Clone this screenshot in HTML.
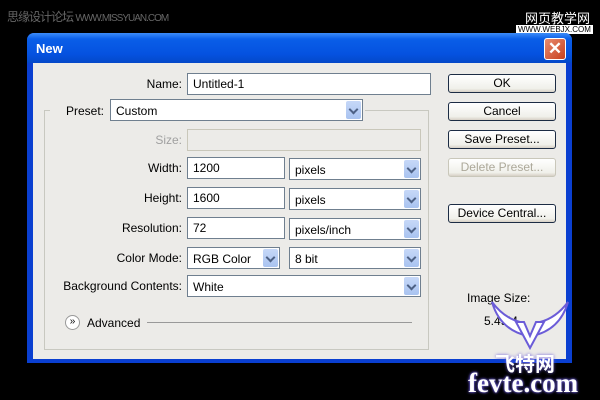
<!DOCTYPE html>
<html><head><style>
*{margin:0;padding:0;box-sizing:border-box}
body{width:600px;height:400px;background:#000;position:relative;overflow:hidden;font-family:"Liberation Sans","Noto Sans CJK SC",sans-serif;font-size:12px;color:#000}
.a{position:absolute}
.win{left:27px;top:33px;width:545px;height:330px;background:#0a3fd0;border-radius:7px 7px 0 0}
.title{left:27px;top:33px;width:545px;height:30px;border-radius:7px 7px 0 0;background:linear-gradient(#3c8cf8,#0a5ee8 20%,#0552e0 70%,#0448c8)}
.body{left:33px;top:63px;width:533px;height:296px;background:#ecebe8}
.lbl{text-align:right;width:160px}
.fld{background:#fff;border:1px solid #6f7f8f;height:22px;padding:3px 5px;font-size:12px}
.dd{background:#fff;border:1px solid #6f7f8f;height:22px;padding:4px 5px}
.dd i{position:absolute;right:1px;top:1px;width:15px;height:18px;background:linear-gradient(#c6d8f8,#a9c3f0);border-radius:2px}
.dd i:after{content:"";position:absolute;left:4px;top:5px;width:5px;height:5px;border-right:2px solid #4d6185;border-bottom:2px solid #4d6185;transform:rotate(45deg)}
.btn{left:448px;width:108px;height:19px;border:1px solid #1c2c44;border-radius:3px;background:linear-gradient(#fff,#f0f0ea 80%,#d6d0c5);text-align:center;line-height:17px}
</style></head><body>
<div class="a" style="left:7px;top:8px;color:#666;font-size:12px;letter-spacing:-1px">思缘设计论坛 <span style="font-size:10px">WWW.MISSYUAN.COM</span></div>
<div class="a" style="left:525px;top:8px;color:#fff;font-size:13px">网页教学网</div>
<div class="a" style="left:516px;top:25px;background:#fff;color:#000;font-size:8px;padding:0 2px">WWW.WEBJX.COM</div>
<div class="a win"></div>
<div class="a title"></div>
<div class="a" style="left:36px;top:41px;color:#fff;font-weight:bold;font-size:13px">New</div>
<div class="a" style="left:544px;top:38px;width:22px;height:22px;border:1px solid #fff;border-radius:3px;background:linear-gradient(135deg,#e88c70,#c8401e);color:#fff;text-align:center;font-size:17px;line-height:20px;font-weight:bold">✕</div>
<div class="a body"></div>
<div class="a lbl" style="left:22px;top:77px">Name:</div>
<div class="a fld" style="left:187px;top:73px;width:244px">Untitled-1</div>
<div class="a" style="left:44px;top:110px;width:385px;height:240px;border:1px solid #c8c8c0"></div>
<div class="a" style="left:50px;top:104px;width:315px;height:14px;background:#ecebe8"></div>
<div class="a" style="left:66px;top:104px">Preset:</div>
<div class="a dd" style="left:110px;top:99px;width:253px">Custom<i></i></div>
<div class="a lbl" style="left:22px;top:133px;color:#a0a0a0">Size:</div>
<div class="a" style="left:187px;top:129px;width:234px;height:22px;border:1px solid #c9c7ba;background:#ecebe8"></div>
<div class="a lbl" style="left:22px;top:161px">Width:</div>
<div class="a fld" style="left:187px;top:157px;width:98px">1200</div>
<div class="a dd" style="left:289px;top:158px;width:132px">pixels<i></i></div>
<div class="a lbl" style="left:22px;top:191px">Height:</div>
<div class="a fld" style="left:187px;top:187px;width:98px">1600</div>
<div class="a dd" style="left:289px;top:188px;width:132px">pixels<i></i></div>
<div class="a lbl" style="left:22px;top:221px">Resolution:</div>
<div class="a fld" style="left:187px;top:217px;width:98px">72</div>
<div class="a dd" style="left:289px;top:218px;width:132px">pixels/inch<i></i></div>
<div class="a lbl" style="left:22px;top:251px">Color Mode:</div>
<div class="a dd" style="left:187px;top:247px;width:93px">RGB Color<i></i></div>
<div class="a dd" style="left:289px;top:247px;width:132px">8 bit<i></i></div>
<div class="a lbl" style="left:22px;top:279px">Background Contents:</div>
<div class="a dd" style="left:187px;top:275px;width:234px">White<i></i></div>
<div class="a" style="left:65px;top:315px;width:15px;height:15px;border:1px solid #999;border-radius:50%;background:#fff;font-size:10px;text-align:center;line-height:12px">»</div>
<div class="a" style="left:87px;top:316px">Advanced</div>
<div class="a" style="left:147px;top:322px;width:265px;border-top:1px solid #999"></div>
<div class="a btn" style="top:74px">OK</div>
<div class="a btn" style="top:102px">Cancel</div>
<div class="a btn" style="top:130px">Save Preset...</div>
<div class="a btn" style="top:158px;color:#aca899;border-color:#c9c7ba">Delete Preset...</div>
<div class="a btn" style="top:204px">Device Central...</div>
<div class="a" style="left:467px;top:291px">Image Size:</div>
<div class="a" style="left:484px;top:314px">5.49M</div>
<svg class="a" style="left:490px;top:300px" width="80" height="50" viewBox="0 0 80 50"><path d="M2 2 Q10 30 38 36 L30 22 Q14 18 2 2Z M78 2 Q70 30 42 36 L50 22 Q66 18 78 2Z" fill="#fff" stroke="#6b5cd8" stroke-width="2"/><path d="M26 22 L40 48 L54 22 L46 22 L40 36 L34 22Z" fill="#fff" stroke="#6b5cd8" stroke-width="2"/></svg>
<div class="a" style="left:495px;top:348px;color:#fff;font-weight:bold;font-size:20px;text-shadow:0 0 3px #6b5cd8">飞特网</div>
<div class="a" style="left:468px;top:368px;color:#fff;font-weight:bold;font-size:27px;font-family:'Liberation Serif',serif;text-shadow:0 0 3px #6b5cd8,0 0 2px #6b5cd8">fevte.com</div>
</body></html>
